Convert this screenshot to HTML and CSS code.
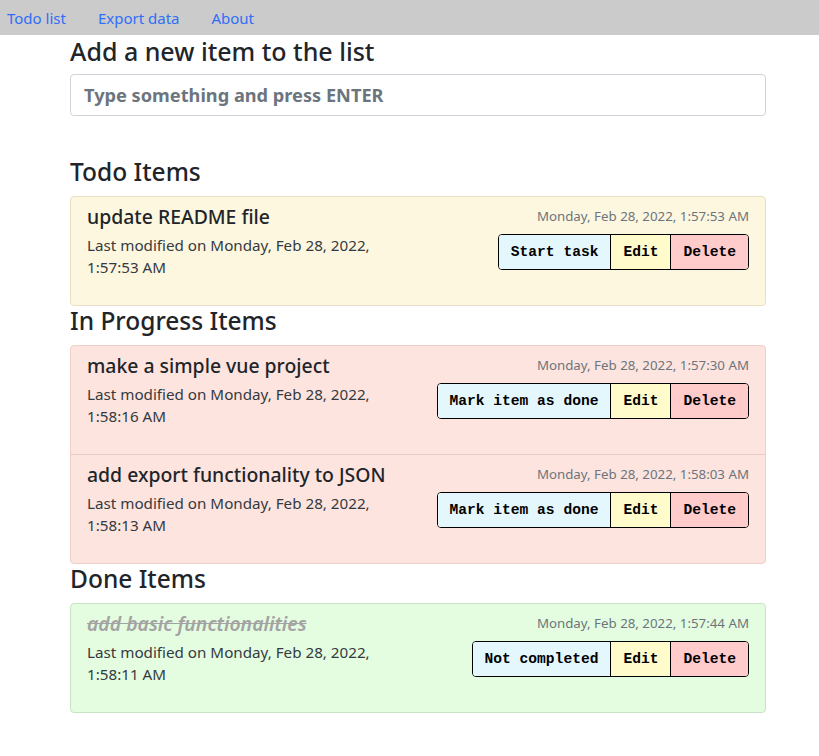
FILE: index.html
```html
<!DOCTYPE html>
<html lang="en">
<head>
<meta charset="utf-8">
<title>Todo list</title>
<link rel="stylesheet" href="styles.css">
</head>
<body>
<nav class="topnav">
  <a class="navlink" href="#">Todo list</a>
  <a class="navlink" href="#">Export data</a>
  <a class="navlink" href="#">About</a>
</nav>
<main class="container">
  <h2 class="heading heading-first">Add a new item to the list</h2>
  <input class="add-input" type="text" placeholder="Type something and press ENTER">

  <section class="group">
    <h2 class="heading">Todo Items</h2>
    <ul class="item-list list-todo">
      <li class="item">
        <div class="item-main">
          <h3 class="item-title">update README file</h3>
          <p class="item-meta">Last modified on Monday, Feb 28, 2022, 1:57:53 AM</p>
        </div>
        <div class="item-side">
          <div class="item-date">Monday, Feb 28, 2022, 1:57:53 AM</div>
          <div class="btn-group">
            <button class="btn btn-state">Start task</button>
            <button class="btn btn-edit">Edit</button>
            <button class="btn btn-delete">Delete</button>
          </div>
        </div>
      </li>
    </ul>
  </section>

  <section class="group">
    <h2 class="heading">In Progress Items</h2>
    <ul class="item-list list-progress">
      <li class="item">
        <div class="item-main">
          <h3 class="item-title">make a simple vue project</h3>
          <p class="item-meta">Last modified on Monday, Feb 28, 2022, 1:58:16 AM</p>
        </div>
        <div class="item-side">
          <div class="item-date">Monday, Feb 28, 2022, 1:57:30 AM</div>
          <div class="btn-group">
            <button class="btn btn-state">Mark item as done</button>
            <button class="btn btn-edit">Edit</button>
            <button class="btn btn-delete">Delete</button>
          </div>
        </div>
      </li>
      <li class="item">
        <div class="item-main">
          <h3 class="item-title">add export functionality to JSON</h3>
          <p class="item-meta">Last modified on Monday, Feb 28, 2022, 1:58:13 AM</p>
        </div>
        <div class="item-side">
          <div class="item-date">Monday, Feb 28, 2022, 1:58:03 AM</div>
          <div class="btn-group">
            <button class="btn btn-state">Mark item as done</button>
            <button class="btn btn-edit">Edit</button>
            <button class="btn btn-delete">Delete</button>
          </div>
        </div>
      </li>
    </ul>
  </section>

  <section class="group">
    <h2 class="heading">Done Items</h2>
    <ul class="item-list list-done">
      <li class="item">
        <div class="item-main">
          <h3 class="item-title item-title-done">add basic functionalities</h3>
          <p class="item-meta">Last modified on Monday, Feb 28, 2022, 1:58:11 AM</p>
        </div>
        <div class="item-side">
          <div class="item-date">Monday, Feb 28, 2022, 1:57:44 AM</div>
          <div class="btn-group">
            <button class="btn btn-state">Not completed</button>
            <button class="btn btn-edit">Edit</button>
            <button class="btn btn-delete">Delete</button>
          </div>
        </div>
      </li>
    </ul>
  </section>
</main>
</body>
</html>
```

FILE: styles.css
```css
* { box-sizing: border-box; }

body {
  margin: 0;
  font-family: "Noto Sans", "Open Sans", sans-serif;
  color: #212529;
  background: #fff;
}

.topnav {
  height: 35px;
  background: #cbcbcb;
  display: flex;
  align-items: center;
  gap: 32px;
  padding: 0 7px;
}

.navlink {
  color: #2f6ff7;
  text-decoration: none;
  font-size: 15px;
  line-height: 24px;
}

.container {
  padding: 0 53px 0 70px;
}

.heading {
  font-size: 24.5px;
  font-weight: 500;
  line-height: 30px;
  margin: 0 0 9px;
}

.heading-first {
  font-size: 25px;
  margin: 1px 0 8px;
}

.add-input {
  display: block;
  width: 100%;
  height: 42px;
  border: 1px solid #ced4da;
  border-radius: 4px;
  padding: 0 13px;
  font-family: inherit;
  font-size: 18.2px;
  font-weight: 700;
  margin-bottom: 41px;
}

.add-input::placeholder {
  color: #6c757d;
  opacity: 1;
}

.item-list {
  list-style: none;
  margin: 0;
  padding: 0;
  border: 1px solid;
  border-radius: 4px;
}

.list-todo { background: #fef7e0; border-color: #e8dfc6; }
.list-progress { background: #fee4de; border-color: #ecd0c9; }
.list-done { background: #e4fde0; border-color: #c9e3c5; }

.list-progress .item + .item { border-top: 1px solid #e6c9c2; }

.item {
  display: flex;
  justify-content: space-between;
  align-items: flex-start;
  padding: 8px 16px 11px 16px;
}

.item-main {
  width: 310px;
}

.item-title {
  font-size: 19.4px;
  font-weight: 500;
  line-height: 24px;
  margin: 0 0 5px;
}

.item-title-done {
  font-style: italic;
  font-weight: 600;
  color: #a3a3a3;
  text-decoration: line-through;
}

.item-meta {
  font-size: 15.2px;
  line-height: 22px;
  margin: 0 0 16px;
  color: #343a40;
}

.item-side {
  display: flex;
  flex-direction: column;
  align-items: flex-end;
}

.item-date {
  font-size: 13.3px;
  line-height: 21px;
  color: #6c757d;
  margin: 1px 0 7px;
}

.btn-group {
  display: flex;
  border: 1px solid #000;
  border-radius: 4px;
  overflow: hidden;
}

.btn {
  font-family: "Liberation Mono", "DejaVu Sans Mono", monospace;
  font-weight: 700;
  font-size: 14.6px;
  line-height: 22px;
  padding: 6px 12px;
  border: 0;
  color: #000;
  cursor: pointer;
}

.btn + .btn { border-left: 1px solid #000; }

.btn-state { background: #e3f7fd; }
.btn-edit { background: #fffbcb; }
.btn-delete { background: #ffcbcb; }
```
